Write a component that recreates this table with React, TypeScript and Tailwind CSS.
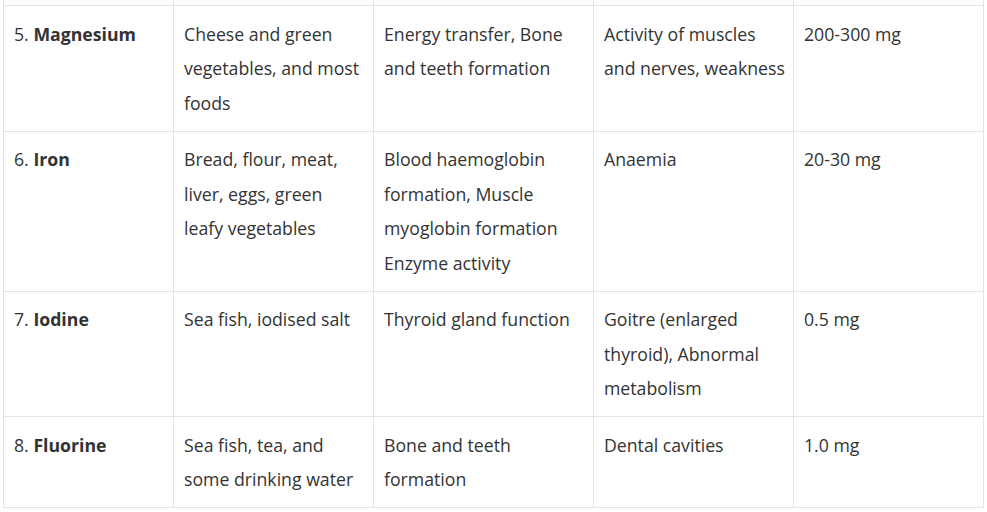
import React from "react";

type Row = { num: string; name: string; cells: string[][] };

const rows: Row[] = [
  {
    num: "5.",
    name: "Magnesium",
    cells: [
      ["Cheese and green", "vegetables, and most", "foods"],
      ["Energy transfer, Bone", "and teeth formation"],
      ["Activity of muscles", "and nerves, weakness"],
      ["200-300 mg"],
    ],
  },
  {
    num: "6.",
    name: "Iron",
    cells: [
      ["Bread, flour, meat,", "liver, eggs, green", "leafy vegetables"],
      ["Blood haemoglobin", "formation, Muscle", "myoglobin formation", "Enzyme activity"],
      ["Anaemia"],
      ["20-30 mg"],
    ],
  },
  {
    num: "7.",
    name: "Iodine",
    cells: [
      ["Sea fish, iodised salt"],
      ["Thyroid gland function"],
      ["Goitre (enlarged", "thyroid), Abnormal", "metabolism"],
      ["0.5 mg"],
    ],
  },
  {
    num: "8.",
    name: "Fluorine",
    cells: [
      ["Sea fish, tea, and", "some drinking water"],
      ["Bone and teeth", "formation"],
      ["Dental cavities"],
      ["1.0 mg"],
    ],
  },
];

const cell =
  "border-r border-b border-[#e4e4e4] px-[10px] py-[10.5px] leading-[34.5px] whitespace-nowrap";

export default function App() {
  return (
    <div className="w-[987px] h-[512px] bg-white overflow-hidden">
      <div
        className="ml-[3px] grid grid-cols-[170px_200px_220px_200px_190px] border-l border-[#e4e4e4] text-[17.7px] text-[#333333]"
        style={{ fontFamily: '"Open Sans", "Noto Sans", sans-serif' }}
      >
        <div className="h-[6px] border-r border-b border-[#e4e4e4]" />
        <div className="h-[6px] border-r border-b border-[#e4e4e4]" />
        <div className="h-[6px] border-r border-b border-[#e4e4e4]" />
        <div className="h-[6px] border-r border-b border-[#e4e4e4]" />
        <div className="h-[6px] border-r border-b border-[#e4e4e4]" />
        {rows.map((r) => (
          <React.Fragment key={r.name}>
            <div className={cell}>
              {r.num} <strong className="font-bold">{r.name}</strong>
            </div>
            {r.cells.map((lines, i) => (
              <div key={i} className={cell}>
                {lines.map((l, j) => (
                  <div key={j}>{l}</div>
                ))}
              </div>
            ))}
          </React.Fragment>
        ))}
      </div>
    </div>
  );
}
